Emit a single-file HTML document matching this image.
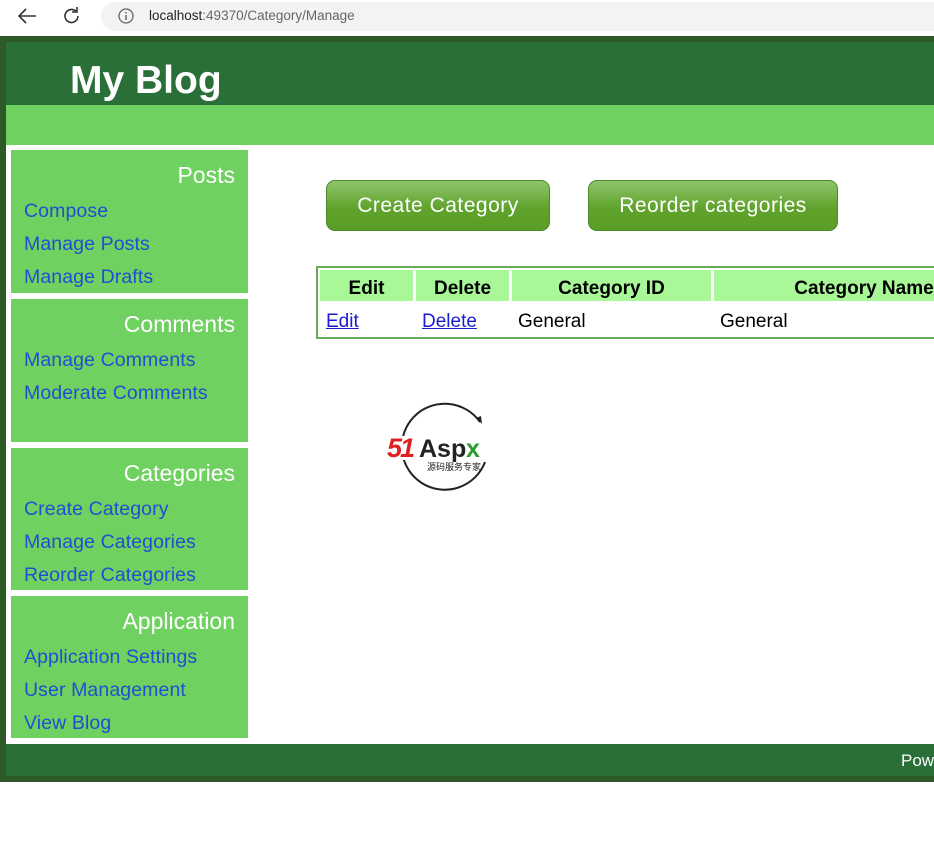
<!DOCTYPE html>
<html><head><meta charset="utf-8"><style>
*{margin:0;padding:0;box-sizing:border-box}
body{width:934px;height:860px;background:#fff;position:relative;overflow:hidden;font-family:"Liberation Sans",sans-serif}
.a{position:absolute}
.box{position:absolute;left:11px;width:237px;background:#6fd160}
.box h3{font-weight:normal;color:#fff;font-size:23px;text-align:right;padding-right:13px;margin-top:11px;height:33px;line-height:28px}
.box a{display:block;color:#1f4fd2;text-decoration:none;font-size:19.5px;padding-left:13px;height:33px;line-height:34px;letter-spacing:0.1px}
.btn{position:absolute;top:180px;height:51px;border-radius:9px;border:1px solid #4d8a2a;background:linear-gradient(#90c46c,#5fa32c 55%,#5a9e26);color:#fff;font-size:21px;text-align:center;line-height:49px;letter-spacing:0.5px}
.th{position:absolute;top:270px;height:31px;background:#a8f898;font-weight:bold;font-size:19px;text-align:center;line-height:38px}
.td{position:absolute;top:303px;height:33px;font-size:19px;line-height:38px}
.td a{color:#1a1ad0}
</style></head><body>
<div class="a" style="left:0;top:0;width:934px;height:36px;background:#fff"></div>
<div class="a" style="left:101px;top:2px;width:860px;height:29px;background:#f1f3f4;border-radius:15px"></div>
<svg class="a" style="left:16px;top:6px" width="24" height="20"><path d="M20 10H4M10 3L3 10l7 7" fill="none" stroke="#333" stroke-width="1.6"/></svg>
<svg class="a" style="left:61px;top:5px" width="22" height="22"><path d="M17 11a6.5 6.5 0 1 1-2-4.7" fill="none" stroke="#333" stroke-width="1.6"/><path d="M16 2v5h-5" fill="none" stroke="#333" stroke-width="1.6"/></svg>
<svg class="a" style="left:117px;top:7px" width="18" height="18"><circle cx="9" cy="9" r="7" fill="none" stroke="#666" stroke-width="1.3"/><path d="M9 8v5M9 5v1.5" stroke="#666" stroke-width="1.5"/></svg>
<div class="a" style="left:149px;top:8px;font-size:13.5px;color:#222">localhost<span style="color:#666">:49370/Category/Manage</span></div>
<div class="a" style="left:0;top:36px;width:934px;height:746px;background:#2d5a27"></div>
<div class="a" style="left:6px;top:42px;width:928px;height:63px;background:#2a6e38"></div>
<div class="a" style="left:70px;top:59px;color:#fff;font-weight:bold;font-size:39px">My Blog</div>
<div class="a" style="left:6px;top:105px;width:928px;height:40px;background:#6fd160"></div>
<div class="a" style="left:6px;top:145px;width:928px;height:599px;background:#fff"></div>
<div class="box" style="top:150px;height:143px"><h3>Posts</h3><a>Compose</a><a>Manage Posts</a><a>Manage Drafts</a></div>
<div class="box" style="top:299px;height:143px"><h3>Comments</h3><a>Manage Comments</a><a>Moderate Comments</a></div>
<div class="box" style="top:448px;height:142px"><h3>Categories</h3><a>Create Category</a><a>Manage Categories</a><a>Reorder Categories</a></div>
<div class="box" style="top:596px;height:142px"><h3>Application</h3><a>Application Settings</a><a>User Management</a><a>View Blog</a></div>
<div class="btn" style="left:326px;width:224px">Create Category</div>
<div class="btn" style="left:588px;width:250px">Reorder categories</div>
<div class="a" style="left:316px;top:266px;width:630px;height:73px;border:2px solid #6aaa5a"></div>
<div class="th" style="left:320px;width:93px">Edit</div>
<div class="th" style="left:416px;width:93px">Delete</div>
<div class="th" style="left:512px;width:199px">Category ID</div>
<div class="th" style="left:714px;width:300px">Category Name</div>
<div class="td" style="left:326px"><a href="#">Edit</a></div>
<div class="td" style="left:422px"><a href="#">Delete</a></div>
<div class="td" style="left:518px">General</div>
<div class="td" style="left:720px">General</div>
<svg class="a" style="left:385px;top:400px" width="130" height="96">
<path d="M100 62A43 43 0 1 1 95 22" fill="none" stroke="#222" stroke-width="2"/>
<path d="M91 18l6 6-1-8z" fill="#222"/>
<rect x="10" y="36" width="112" height="24" fill="#fff"/>
<text x="2" y="57" font-family="Liberation Sans" font-style="italic" font-weight="bold" font-size="27" fill="#e02020" letter-spacing="-2">51</text>
<text x="34" y="57" font-family="Liberation Sans" font-weight="bold" font-size="25" fill="#222">Asp</text>
<text x="81" y="57" font-family="Liberation Sans" font-weight="bold" font-size="25" fill="#2a9a2a">x</text>
<text x="42" y="70" font-family="Noto Sans CJK SC,sans-serif" font-size="9" fill="#222">源码服务专家</text>
</svg>
<div class="a" style="left:6px;top:744px;width:928px;height:32px;background:#2a6e38"></div>
<div class="a" style="left:901px;top:751px;color:#fff;font-size:17px">Powered</div>
</body></html>
